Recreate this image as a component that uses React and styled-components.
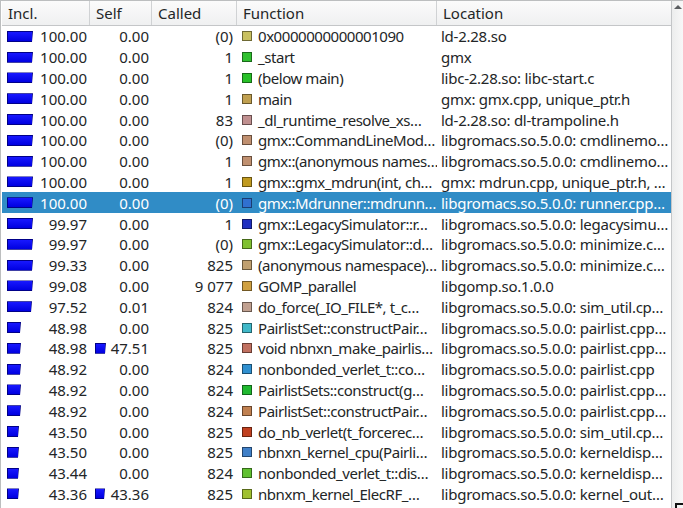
import React from "react";
import styled, { createGlobalStyle } from "styled-components";

const Global = createGlobalStyle`
  html, body { margin: 0; padding: 0; background: #ffffff; }
  body { font-family: "Noto Sans", "Open Sans", sans-serif; font-size: 15px; color: #232627; }
`;

const COLS = "88px 62px 85px 200px 1fr";

const Frame = styled.div`
  width: 683px;
  height: 508px;
  box-sizing: border-box;
  border: 1px solid #bcbebf;
  border-right: none;
  border-bottom: none;
  display: flex;
  overflow: hidden;
  background: #fff;
`;

const View = styled.div`
  flex: 1;
  display: flex;
  flex-direction: column;
  padding-left: 1px;
  min-width: 0;
`;

const Header = styled.div`
  display: grid;
  grid-template-columns: ${COLS};
  height: 24px;
  border-bottom: 1px solid #c4c6c8;
  background: linear-gradient(#fbfbfb, #eff0f1);
  flex: none;
`;

const HeadCell = styled.div`
  display: flex;
  align-items: center;
  padding-left: 6px;
  border-right: ${(p) => (p.$last ? "none" : "1px solid #d0d2d4")};
  white-space: nowrap;
  overflow: hidden;
`;

const Body = styled.div`
  display: flex;
  flex-direction: column;
`;

const Row = styled.div`
  display: grid;
  grid-template-columns: ${COLS};
  height: 20.8px;
  align-items: center;
  background: ${(p) => (p.$sel ? "#308cc6" : "transparent")};
  color: ${(p) => (p.$sel ? "#ffffff" : "#232627")};
  white-space: nowrap;
`;

const NumCell = styled.div`
  display: flex;
  align-items: center;
  justify-content: space-between;
  padding: 0 3px 0 5px;
  overflow: hidden;
`;

const RightCell = styled.div`
  text-align: right;
  padding-right: 4px;
  overflow: hidden;
`;

const Bar = styled.span`
  display: inline-block;
  height: 9px;
  background: linear-gradient(#1818ff, #0000e0);
  border: 1px solid #000088;
  clip-path: polygon(0 0, 100% 0, calc(100% - 1px) 100%, 0 100%);
  flex: none;
`;

const FuncCell = styled.div`
  display: flex;
  align-items: center;
  gap: 6px;
  padding-left: 5px;
  overflow: hidden;
  letter-spacing: -0.45px;
`;

const Swatch = styled.span`
  display: inline-block;
  width: 8px;
  height: 8px;
  background: ${(p) => p.$c};
  border: 1px solid rgba(0, 0, 0, 0.45);
  flex: none;
`;

const LocCell = styled.div`
  padding-left: 4px;
  overflow: hidden;
  letter-spacing: -0.25px;
`;

const Scroll = styled.div`
  width: 11px;
  flex: none;
  border-left: 1px solid #c4c6c8;
  background: linear-gradient(90deg, #eceded, #f8f8f8);
  position: relative;
`;

const Arrow = styled.div`
  width: 0;
  height: 0;
  margin: 4px auto 0;
  border-left: 4px solid transparent;
  border-right: 4px solid transparent;
  border-bottom: 4px solid #5a5d60;
`;

const Grip = styled.div`
  position: absolute;
  right: 0;
  bottom: 0;
  width: 8px;
  height: 5px;
  border-left: 2px solid #111;
  border-top: 2px solid #111;
  box-sizing: border-box;
`;

const rows = [
  [100, "100.00", 0, "0.00", "(0)", "#c8c060", "0x0000000000001090", "ld-2.28.so"],
  [100, "100.00", 0, "0.00", "1", "#30c030", "_start", "gmx"],
  [100, "100.00", 0, "0.00", "1", "#28c028", "(below main)", "libc-2.28.so: libc-start.c"],
  [100, "100.00", 0, "0.00", "1", "#c0a050", "main", "gmx: gmx.cpp, unique_ptr.h"],
  [100, "100.00", 0, "0.00", "83", "#c09090", "_dl_runtime_resolve_xs…", "ld-2.28.so: dl-trampoline.h"],
  [100, "100.00", 0, "0.00", "(0)", "#c09070", "gmx::CommandLineMod…", "libgromacs.so.5.0.0: cmdlinemo…"],
  [100, "100.00", 0, "0.00", "1", "#c09070", "gmx::(anonymous names…", "libgromacs.so.5.0.0: cmdlinemo…"],
  [100, "100.00", 0, "0.00", "1", "#c09a20", "gmx::gmx_mdrun(int, ch…", "gmx: mdrun.cpp, unique_ptr.h, …"],
  [100, "100.00", 0, "0.00", "(0)", "#3070d0", "gmx::Mdrunner::mdrunn…", "libgromacs.so.5.0.0: runner.cpp…", true],
  [99.97, "99.97", 0, "0.00", "1", "#2030c0", "gmx::LegacySimulator::r…", "libgromacs.so.5.0.0: legacysimu…"],
  [99.97, "99.97", 0, "0.00", "(0)", "#80c030", "gmx::LegacySimulator::d…", "libgromacs.so.5.0.0: minimize.c…"],
  [99.33, "99.33", 0, "0.00", "825", "#c0a070", "(anonymous namespace)…", "libgromacs.so.5.0.0: minimize.c…"],
  [99.08, "99.08", 0, "0.00", "9 077", "#d0a040", "GOMP_parallel", "libgomp.so.1.0.0"],
  [97.52, "97.52", 0, "0.01", "824", "#c0a090", "do_force(_IO_FILE*, t_c…", "libgromacs.so.5.0.0: sim_util.cp…"],
  [48.98, "48.98", 0, "0.00", "825", "#40b8c8", "PairlistSet::constructPair…", "libgromacs.so.5.0.0: pairlist.cpp…"],
  [48.98, "48.98", 47.51, "47.51", "825", "#c07060", "void nbnxn_make_pairlis…", "libgromacs.so.5.0.0: pairlist.cpp…"],
  [48.92, "48.92", 0, "0.00", "824", "#3090d0", "nonbonded_verlet_t::co…", "libgromacs.so.5.0.0: pairlist.cpp"],
  [48.92, "48.92", 0, "0.00", "824", "#20b830", "PairlistSets::construct(g…", "libgromacs.so.5.0.0: pairlist.cpp…"],
  [48.92, "48.92", 0, "0.00", "824", "#c08050", "PairlistSet::constructPair…", "libgromacs.so.5.0.0: pairlist.cpp…"],
  [43.5, "43.50", 0, "0.00", "825", "#c04020", "do_nb_verlet(t_forcerec…", "libgromacs.so.5.0.0: sim_util.cp…"],
  [43.5, "43.50", 0, "0.00", "825", "#4080c8", "nbnxn_kernel_cpu(Pairli…", "libgromacs.so.5.0.0: kerneldisp…"],
  [43.44, "43.44", 0, "0.00", "824", "#60c030", "nonbonded_verlet_t::dis…", "libgromacs.so.5.0.0: kerneldisp…"],
  [43.36, "43.36", 43.36, "43.36", "825", "#a0c030", "nbnxm_kernel_ElecRF_…", "libgromacs.so.5.0.0: kernel_out…"],
];

const barW = (v) => Math.max(0, Math.round((v / 100) * 24));

export default function App() {
  return (
    <>
      <Global />
      <Frame>
        <View>
          <Header>
            <HeadCell>Incl.</HeadCell>
            <HeadCell>Self</HeadCell>
            <HeadCell>Called</HeadCell>
            <HeadCell>Function</HeadCell>
            <HeadCell $last>Location</HeadCell>
          </Header>
          <Body>
            {rows.map((r, i) => (
              <Row key={i} $sel={r[8]}>
                <NumCell>
                  <Bar style={{ width: barW(r[0]) }} />
                  <span>{r[1]}</span>
                </NumCell>
                <NumCell>
                  {r[2] > 0 ? <Bar style={{ width: barW(r[2]) - 2 }} /> : <span />}
                  <span>{r[3]}</span>
                </NumCell>
                <RightCell>{r[4]}</RightCell>
                <FuncCell>
                  <Swatch $c={r[5]} />
                  <span>{r[6]}</span>
                </FuncCell>
                <LocCell>{r[7]}</LocCell>
              </Row>
            ))}
          </Body>
        </View>
        <Scroll>
          <Arrow />
          <Grip />
        </Scroll>
      </Frame>
    </>
  );
}
